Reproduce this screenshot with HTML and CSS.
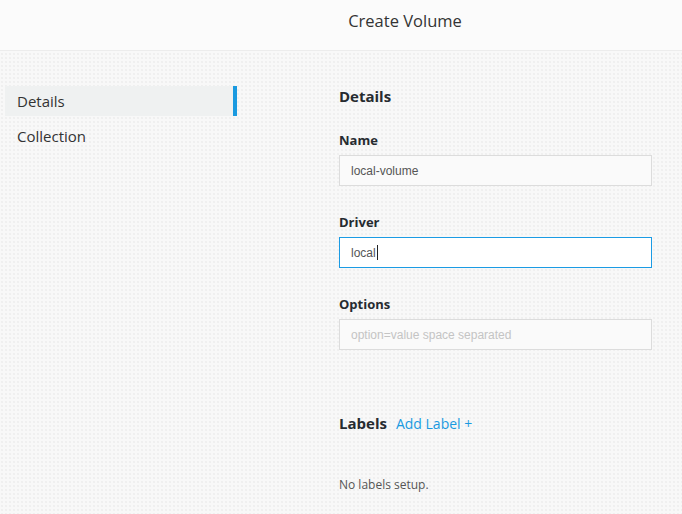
FILE: index.html
```html
<!DOCTYPE html>
<html>
<head>
<meta charset="utf-8">
<link rel="stylesheet" href="styles.css">
</head>
<body>
<header class="topbar">
  <h1 class="title">Create Volume</h1>
</header>
<div class="layout">
  <nav class="sidebar">
    <div class="nav-item active">Details</div>
    <div class="nav-item">Collection</div>
  </nav>
  <main class="content">
    <h2 class="section-title">Details</h2>
    <div class="field">
      <label class="field-label">Name</label>
      <input class="input" type="text" value="local-volume">
    </div>
    <div class="field">
      <label class="field-label">Driver</label>
      <div class="focus-box">local<span class="caret"></span></div>
    </div>
    <div class="field">
      <label class="field-label">Options</label>
      <input class="input" type="text" placeholder="option=value space separated">
    </div>
    <div class="labels-head">
      <h2 class="section-title">Labels</h2>
      <a class="add-link">Add Label +</a>
    </div>
    <p class="empty">No labels setup.</p>
  </main>
</div>
</body>
</html>
```
FILE: styles.css
```css
html, body {
  margin: 0;
  padding: 0;
}
body {
  width: 682px;
  height: 514px;
  overflow: hidden;
  font-family: "Open Sans", "Noto Sans", sans-serif;
  color: #333;
  background-color: #f8f8f8;
  background-image: radial-gradient(circle, #efefef 0.7px, transparent 0.9px);
  background-size: 4px 4px;
}
.topbar {
  height: 51px;
  background: #fbfbfb;
  border-bottom: 1px solid #ececec;
  display: flex;
  justify-content: center;
  padding-left: 128px;
  padding-top: 10px;
  box-sizing: border-box;
}
.title {
  margin: 0;
  font-size: 16.5px;
  line-height: 22px;
  font-weight: 400;
  color: #333;
}
.layout {
  display: flex;
  padding-top: 35px;
}
.sidebar {
  width: 232px;
  margin-left: 5px;
  display: flex;
  flex-direction: column;
  gap: 5px;
}
.nav-item {
  height: 30px;
  line-height: 30px;
  padding-left: 12px;
  font-size: 15px;
  color: #333;
}
.nav-item.active {
  background: #eff1f1;
  border-right: 4px solid #1a9ae0;
}
.content {
  margin-left: 102px;
  width: 313px;
  margin-top: -1px;
}
.section-title {
  margin: 0;
  font-size: 15px;
  font-weight: 700;
  color: #262b30;
  line-height: 22px;
}
.field {
  margin-top: 25px;
  display: flex;
  flex-direction: column;
}
.field + .field {
  margin-top: 28px;
}
.field-label {
  font-size: 13px;
  font-weight: 700;
  color: #262b30;
  line-height: 16px;
  margin-bottom: 7px;
}
.input {
  box-sizing: border-box;
  width: 313px;
  height: 31px;
  border: 1px solid #dcdcdc;
  background: #fafafa;
  padding: 0 11px;
  font-family: "Liberation Sans", Arial, sans-serif;
  font-size: 12px;
  color: #555;
  outline: none;
}
.input::placeholder {
  color: #c4c4c4;
}
.focus-box {
  box-sizing: border-box;
  width: 313px;
  height: 31px;
  border: none;
  box-shadow: inset 0 0 0 1px #1b9be4;
  background: #fff;
  padding: 0 12px;
  font-family: "Liberation Sans", Arial, sans-serif;
  font-size: 12px;
  color: #555;
  display: flex;
  align-items: center;
}
.caret {
  display: inline-block;
  width: 1px;
  height: 15px;
  background: #222;
  margin-left: 1px;
}
.labels-head {
  margin-top: 62px;
  display: flex;
  align-items: baseline;
  gap: 9px;
}
.add-link {
  font-size: 14px;
  color: #1a9ae0;
  cursor: pointer;
}
.empty {
  margin: 42px 0 0;
  font-size: 12px;
  color: #555;
}
```
